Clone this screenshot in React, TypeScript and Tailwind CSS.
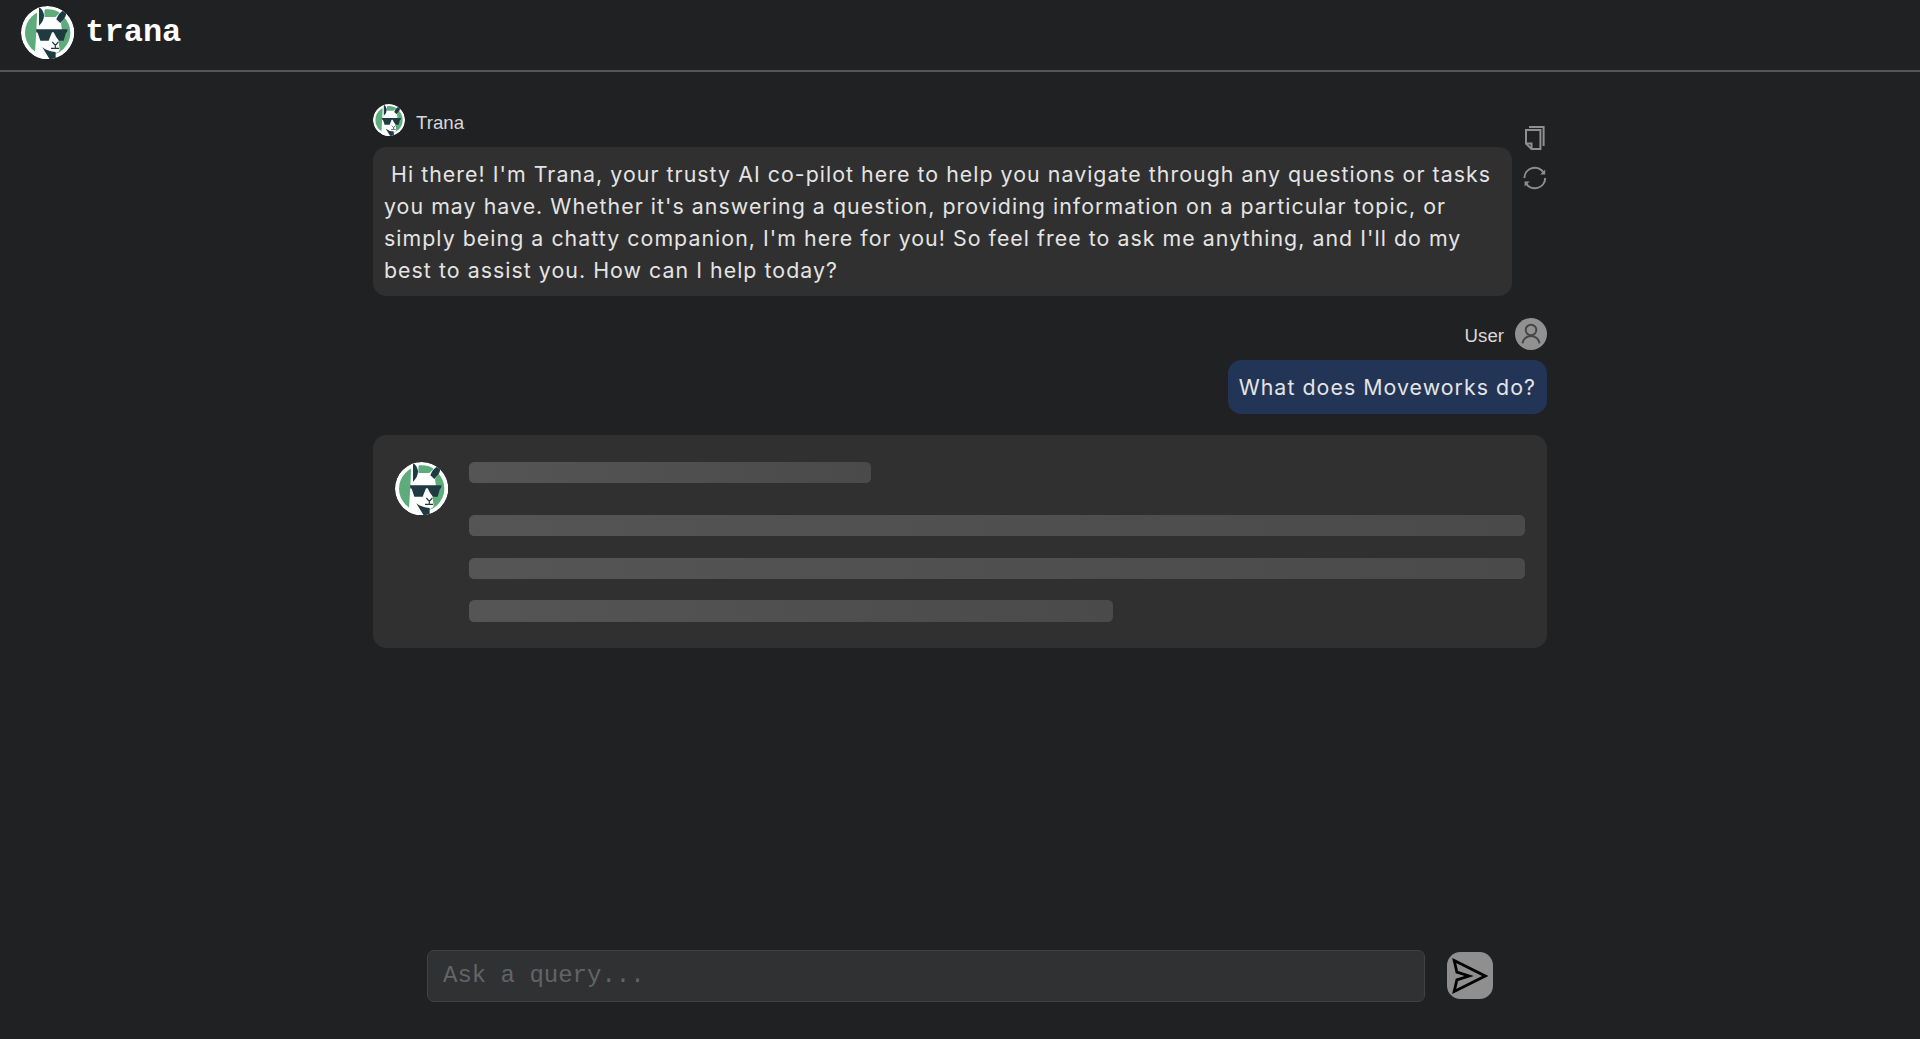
import React from "react";

function Llama({ className }: { className: string }) {
  return (
    <svg viewBox="0 0 160 160" className={className}>
      <defs>
        <clipPath id="disc">
          <circle cx="80" cy="80" r="80" />
        </clipPath>
      </defs>
      <g clipPath="url(#disc)">
        <circle cx="80" cy="80" r="80" fill="#fdfefe" />
        <circle cx="80" cy="80" r="68" fill="#5eac7b" />
        <path
          d="M49 2 L70 2 L71 33 L102 33 L120 10 L137 22 L120 52 L123 72 L112 98 L116 132 Q113 141 104 140 L100 160 L36 160 L42 138 L46 76 Z"
          fill="#fdfefe"
        />
        <path d="M72 10 Q98 8 116 20 L104 32 L71 32 Z" fill="#5eac7b" />
        <path d="M54 3 Q66 10 69 28 Q69 46 54 59 Z" fill="#203a42" />
        <path d="M106 40 Q112 22 128 13 L136 22 Q134 36 118 51 Z" fill="#203a42" />
        <path
          d="M45 70 L140 70 L138 79 L135 80 L128 104 L114 104 L106 94 L98 79 L93 79 L83 104 L58 104 L50 80 L46 79 Z"
          fill="#203a42"
        />
        <path
          d="M94 108 L103 118 L112 108 M103 117 V126 M90 127 H114"
          fill="none"
          stroke="#203a42"
          strokeWidth="3.5"
        />
        <path d="M64 124 Q80 137 104 138 L104 160 L86 160 Z" fill="#203a42" />
      </g>
    </svg>
  );
}

function CopyIcon() {
  return (
    <svg viewBox="0 0 20 24" className="h-6 w-5" fill="none" stroke="#8f8f8f" strokeWidth="2">
      <path d="M4 1 H18.6 V20" />
      <path d="M1 4 H15.4 V23 H6.5 L1 17.5 Z" />
      <path d="M1 17.5 H6.5 V23" />
    </svg>
  );
}

function RefreshIcon() {
  return (
    <svg viewBox="0 0 24 24" className="size-6" fill="none" stroke="#8f8f8f" strokeWidth="2">
      <path d="M1.4 12 A10.4 10.4 0 0 1 20.6 6.6" />
      <path d="M22.2 12 A10.4 10.4 0 0 1 3 17.4" />
      <path d="M22.2 3.6 V8.6 H17.2 Z M1.6 20.4 V15.4 H6.6 Z" fill="#8f8f8f" stroke="none" />
    </svg>
  );
}

function UserIcon() {
  return (
    <svg viewBox="0 0 32 32" className="size-8">
      <circle cx="16" cy="16" r="16" fill="#919191" />
      <g fill="none" stroke="#454545" strokeWidth="1.9">
        <circle cx="16" cy="12" r="5.3" />
        <path d="M7.5 25.3 A8.6 8.6 0 0 1 24.5 25.3" />
      </g>
    </svg>
  );
}

const bar = "h-[21.33px] rounded-[5.33px] bg-linear-to-r from-[#555555] to-[#4a4a4a]";

export default function App() {
  return (
    <div className="flex h-[1039px] flex-col bg-[#202123] font-['Liberation_Sans',sans-serif] text-[#d8d8d8]">
      <header className="flex h-[72px] shrink-0 items-start border-b-2 border-[#555555] pl-[21.3px] pt-[5.5px]">
        <Llama className="size-[53.33px]" />
        <h1 className="ml-[10.67px] mt-[7px] font-['Liberation_Mono',monospace] text-[32px] font-bold leading-[40px] text-white">
          trana
        </h1>
      </header>

      <main className="mx-auto flex w-[1173.33px] flex-1 flex-col pt-[32.4px]">
        <section className="flex justify-between">
          <div className="w-[1138.6px]">
            <div className="flex h-8 items-center gap-[10.67px]">
              <Llama className="size-8" />
              <span className="pt-[5.5px] text-[18.67px] leading-6">Trana</span>
            </div>
            <p className="mt-[10.67px] whitespace-pre-wrap rounded-[13.33px] bg-[#303030] p-[10.67px] font-['Inter',sans-serif] text-[21.33px] leading-8 tracking-[1.045px] text-[#e4e4e4]">
              {" Hi there! I'm Trana, your trusty AI co-pilot here to help you navigate through any questions or tasks you may have. Whether it's answering a question, providing information on a particular topic, or simply being a chatty companion, I'm here for you! So feel free to ask me anything, and I'll do my best to assist you. How can I help today?"}
            </p>
          </div>
          <div className="flex w-6 flex-col items-center gap-[15.5px] pt-[22px]">
            <CopyIcon />
            <RefreshIcon />
          </div>
        </section>

        <section className="mt-[21.33px] flex flex-col items-end">
          <div className="flex h-8 items-center gap-[10.67px]">
            <span className="pt-[4.5px] text-[18.67px] leading-6">User</span>
            <UserIcon />
          </div>
          <p className="mt-[10.67px] rounded-[13.33px] bg-[#233556] p-[10.67px] font-['Inter',sans-serif] text-[21.33px] leading-8 tracking-[1.045px] text-[#e4e4e4]">
            What does Moveworks do?
          </p>
        </section>

        <section className="mt-[21.33px] flex h-[213px] gap-[21.33px] rounded-[13.33px] bg-[#303030] px-[21.33px] pt-[26.67px]">
          <Llama className="size-[53.33px] shrink-0" />
          <div className="flex flex-1 flex-col">
            <div className={`${bar} w-[38%]`} />
            <div className={`${bar} mt-8 w-full`} />
            <div className={`${bar} mt-[21.33px] w-full`} />
            <div className={`${bar} mt-[21.33px] w-[61%]`} />
          </div>
        </section>
      </main>

      <footer className="mx-auto mb-[37px] flex w-[1066px] items-center justify-between">
        <input
          placeholder="Ask a query..."
          className="h-[52px] w-[998px] rounded-[7px] border-[1.33px] border-[#414243] bg-[#303133] px-[15px] pb-[2px] font-['Liberation_Mono',monospace] text-[24px] text-white outline-none placeholder:text-[#636466]"
        />
        <button className="mb-px flex h-[47px] w-[46.5px] items-center justify-center rounded-[13.33px] bg-[#8f8f8f]">
          <svg viewBox="0 0 36 36" className="size-9" fill="none" stroke="#000000" strokeWidth="2.8">
            <path d="M2.2 2.6 L33.2 18 L2.2 33.4 L4.9 21.8 L17 18 L4.9 14.2 Z" />
          </svg>
        </button>
      </footer>
    </div>
  );
}
